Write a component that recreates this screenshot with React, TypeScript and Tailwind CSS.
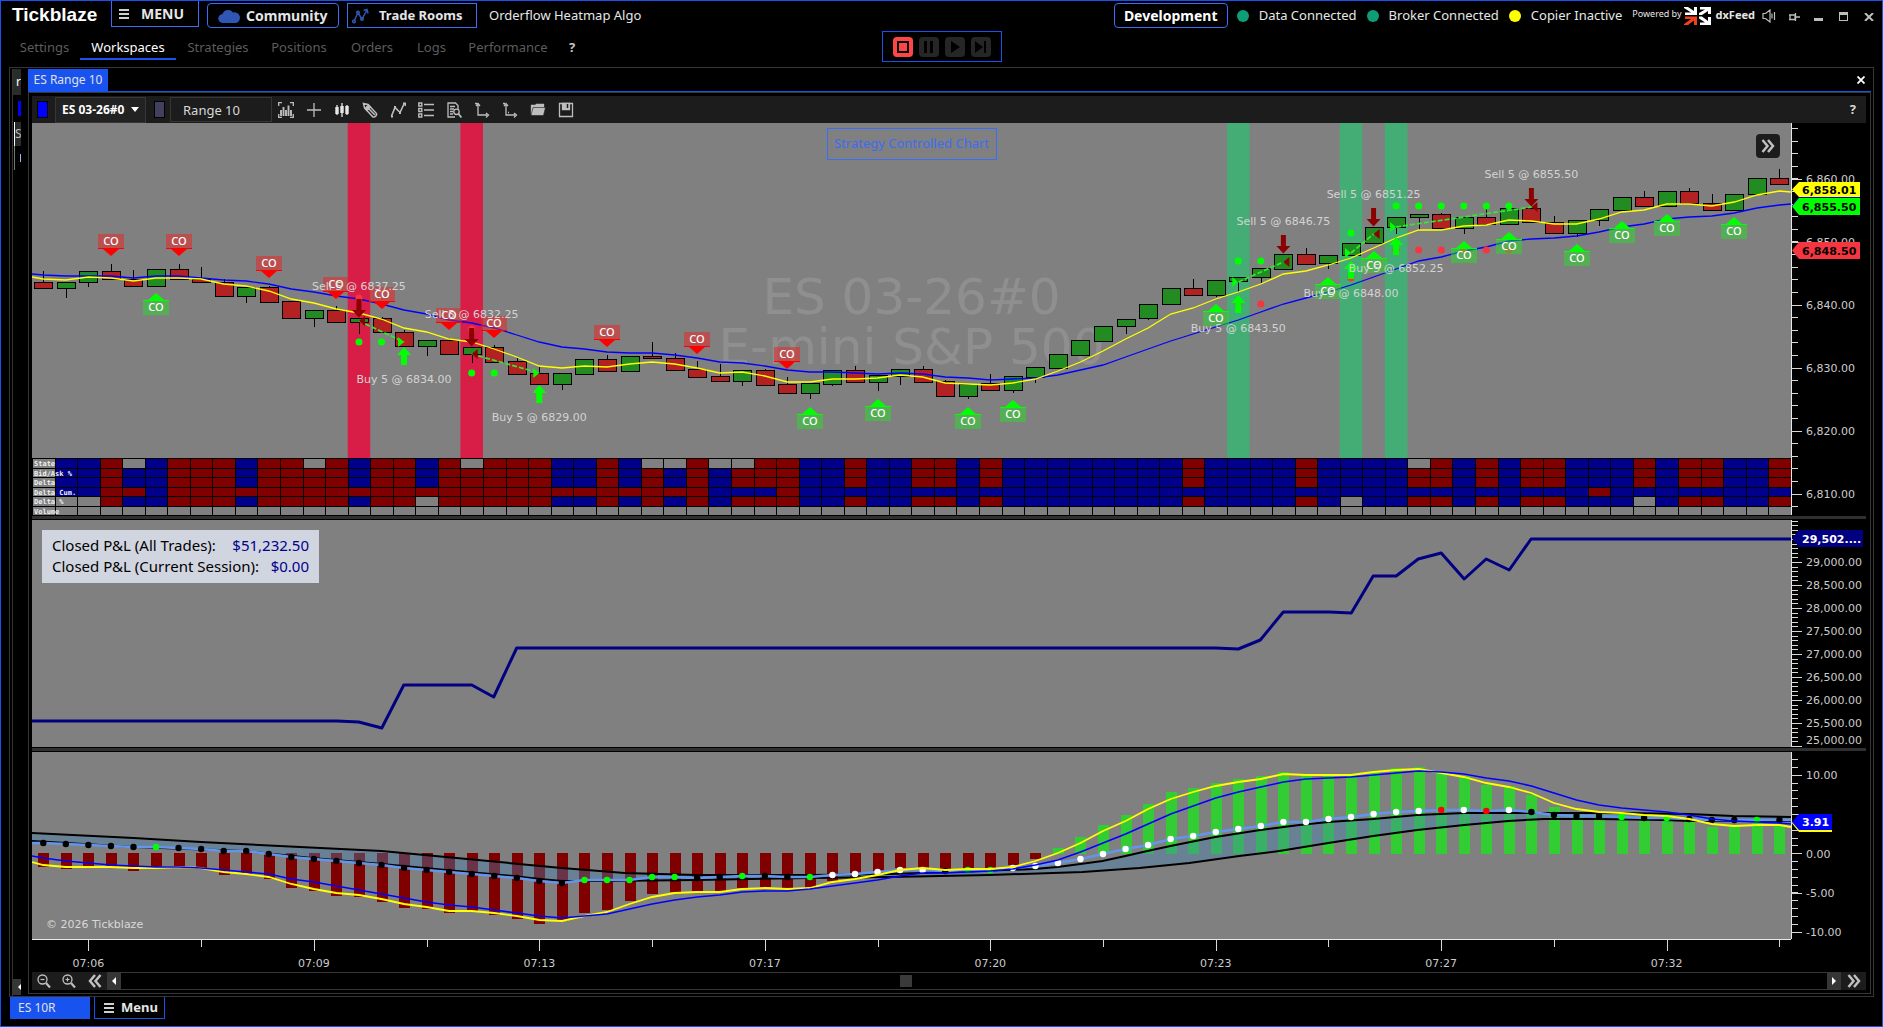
import { useLayoutEffect, useRef, useState } from "react";
import type { ReactNode } from "react";

/* ---------- shared scales ---------- */

const BASE_WIDTH = 1760;
const BARS = 78;

function usePlotWidth() {
  const ref = useRef<HTMLDivElement>(null);
  const [width, setWidth] = useState(BASE_WIDTH);
  useLayoutEffect(() => {
    const el = ref.current;
    if (!el) return;
    const update = () => setWidth(el.clientWidth || BASE_WIDTH);
    update();
    const ro = new ResizeObserver(update);
    ro.observe(el);
    return () => ro.disconnect();
  }, []);
  return { ref, width };
}

type Scale = (i: number) => number;
const makeScale =
  (width: number): Scale =>
  (i) =>
    ((11.3 + 22.56 * i) * width) / BASE_WIDTH;

/* A series holds the left edge value, one value per bar and the right edge value. */
const seriesPoints = (values: number[], x: Scale, width: number) =>
  values
    .map((v, k) => {
      const px = k === 0 ? 0 : k > BARS ? width : x(k - 1);
      return `${px.toFixed(1)},${v}`;
    })
    .join(" ");

const xyPoints = (pts: number[][], width: number) =>
  pts.map(([px, py]) => `${(((px - 32) * width) / BASE_WIDTH).toFixed(1)},${py}`);

/* ---------- price pane data ---------- */

/* direction, body top, body bottom, wick top, wick bottom */
type Candle = [string, number, number, number, number];
const candles: Candle[] = [
  ["r", 282, 288, 271, 288], ["g", 282, 288, 282, 298], ["g", 271, 282, 271, 287], ["r", 271, 279, 264, 279],
  ["r", 279, 286, 270, 286], ["g", 269, 286, 269, 286], ["r", 269, 279, 264, 279], ["r", 279, 282, 267, 282],
  ["r", 282, 296, 279, 296], ["g", 287, 296, 287, 303], ["r", 287, 302, 286, 302], ["r", 301, 318, 301, 318],
  ["g", 310, 318, 310, 327], ["r", 310, 322, 306, 322], ["g", 318, 322, 318, 334], ["r", 318, 332, 317, 332],
  ["r", 332, 346, 330, 346], ["g", 340, 346, 340, 356], ["r", 340, 354, 338, 354], ["g", 347, 354, 347, 363],
  ["r", 347, 362, 345, 362], ["r", 361, 374, 358, 374], ["r", 373, 384, 367, 384], ["g", 373, 384, 373, 390],
  ["g", 359, 374, 359, 375], ["r", 359, 371, 355, 371], ["g", 356, 371, 356, 372], ["r", 356, 358, 342, 358],
  ["r", 358, 370, 353, 370], ["r", 369, 377, 361, 377], ["r", 376, 381, 364, 381], ["g", 370, 381, 370, 386],
  ["r", 370, 385, 369, 385], ["r", 384, 393, 377, 393], ["g", 383, 393, 383, 399], ["g", 370, 384, 370, 386],
  ["r", 370, 382, 366, 382], ["g", 375, 382, 375, 391], ["g", 369, 376, 369, 385], ["r", 369, 382, 366, 382],
  ["r", 381, 396, 380, 396], ["g", 384, 396, 384, 399], ["r", 383, 390, 374, 390], ["g", 376, 390, 376, 393],
  ["g", 367, 377, 367, 383], ["g", 354, 368, 354, 369], ["g", 340, 355, 340, 356], ["g", 326, 341, 326, 342],
  ["g", 319, 326, 319, 334], ["g", 304, 318, 304, 320], ["g", 288, 304, 288, 304], ["r", 288, 295, 279, 295],
  ["g", 280, 295, 280, 297], ["g", 277, 281, 277, 292], ["g", 268, 277, 268, 283], ["g", 254, 269, 254, 270],
  ["r", 254, 264, 248, 264], ["g", 255, 263, 255, 269], ["g", 243, 255, 243, 256], ["g", 227, 243, 227, 243],
  ["g", 217, 227, 217, 234], ["g", 214, 217, 214, 230], ["r", 214, 228, 213, 228], ["g", 217, 228, 217, 234],
  ["r", 217, 224, 208, 224], ["g", 208, 224, 208, 224], ["r", 208, 222, 208, 222], ["r", 222, 233, 216, 233],
  ["g", 220, 233, 220, 237], ["g", 209, 220, 209, 226], ["g", 197, 210, 197, 211], ["r", 197, 206, 191, 206],
  ["g", 191, 206, 191, 206], ["r", 191, 203, 188, 203], ["r", 203, 210, 194, 210], ["g", 194, 210, 194, 210],
  ["g", 178, 194, 178, 194], ["r", 178, 184, 169, 184],
];

const fastAverage = [
  277, 279, 280, 277, 278, 281, 278, 278, 279, 284, 286, 291, 299, 303, 309, 313, 319, 328, 332, 339, 342, 349, 357,
  366, 368, 366, 367, 364, 362, 364, 368, 373, 372, 376, 382, 382, 379, 379, 378, 375, 377, 383, 384, 385, 383, 379,
  371, 362, 351, 339, 328, 314, 308, 299, 292, 284, 274, 271, 265, 258, 248, 238, 230, 230, 226, 225, 220, 221, 224,
  224, 219, 212, 210, 204, 204, 206, 202, 195, 191, 192,
];
const slowAverage = [
  274, 275, 276, 276, 276, 278, 276, 276, 278, 280, 281, 284, 289, 292, 296, 299, 304, 310, 314, 320, 323, 328, 335,
  342, 347, 349, 352, 353, 353, 355, 358, 362, 363, 366, 370, 372, 372, 373, 374, 373, 374, 377, 378, 380, 379, 378,
  375, 370, 365, 357, 349, 341, 334, 327, 320, 312, 304, 298, 292, 285, 277, 269, 261, 257, 251, 247, 241, 239, 238,
  236, 232, 227, 224, 219, 217, 216, 213, 208, 205, 204,
];

const redFlags = [[3, 234], [6, 234], [10, 256], [13, 277], [15, 287], [18, 308], [20, 316], [25, 325], [29, 332], [33, 347]];
const greenFlags = [
  [5, 293], [34, 407], [37, 399], [41, 407], [43, 400], [52, 304], [57, 277], [59, 251], [63, 241], [65, 232],
  [68, 244], [70, 221], [72, 214], [75, 217],
];
const limeDots = [
  [14, 342], [15, 342], [19, 373], [20, 373], [53, 261], [54, 261], [58, 233],
  [60, 206], [61, 206], [62, 206], [63, 206], [64, 206], [65, 206],
];
const redDots = [[14, 298], [19, 329], [53, 304], [54, 304], [58, 278], [60, 250], [61, 250], [62, 250], [63, 250], [64, 250], [65, 250]];
const sellArrows = [[14, 299], [19, 328], [55, 235], [59, 208], [66, 188]];
const buyArrows = [[16, 347], [22, 385], [53, 295], [58, 261], [60, 237]];
const tradeLabels: [number, number, string][] = [
  [14, 290, "Sell 5 @ 6837.25"], [19, 318, "Sell 5 @ 6832.25"], [55, 225, "Sell 5 @ 6846.75"],
  [59, 198, "Sell 5 @ 6851.25"], [66, 178, "Sell 5 @ 6855.50"], [16, 383, "Buy 5 @ 6834.00"],
  [22, 421, "Buy 5 @ 6829.00"], [53, 332, "Buy 5 @ 6843.50"], [58, 297, "Buy 5 @ 6848.00"], [60, 272, "Buy 5 @ 6852.25"],
];
/* start bar, start y, end bar, end y, short trade */
const trades: [number, number, number, number, boolean][] = [
  [14, 321, 16, 342, true], [19, 354, 22, 373, true], [53, 282, 55, 262, false],
  [58, 253, 59, 234, false], [60, 227, 66, 207, false],
];

const bidAsk = "gbbrbbrrrbrrrrbrrbrrrrrbbrbrbrbrrrbbrbbrrbrbbbbbbbbrbbbbrbbbbrrbrbrrbbbrbrrbbr";
const heatRows: { name: string; y: number; h: number; cells: string }[] = [
  { name: "State", y: 458, h: 10, cells: "gbbrgbrrrbrrgrbrrbrgrrrbbrbggrggrrbbrbbrrbrbbbbbbbbrbbbbrbbbbgrbrbrrbbbrbrrbbr" },
  { name: "Bid/Ask %", y: 468, h: 9, cells: bidAsk },
  { name: "Delta", y: 477, h: 10, cells: bidAsk },
  { name: "Delta Cum.", y: 487, h: 9, cells: "gbbrrb" + "r".repeat(24) + "bbbr" + "b".repeat(35) + "r" + "b".repeat(8) },
  { name: "Delta %", y: 496, h: 10, cells: "gggrbbrrrbrrrrbrrgrrrrrbbrbrbrbrrrbbrbbrrbrbbbbbbbbrbbbbrbgbbrrbrbrrbbbgbrrbbr" },
  { name: "Volume", y: 506, h: 9, cells: "g".repeat(78) },
];
const heatColor: Record<string, string> = { b: "#00008b", r: "#800000", g: "#808080" };

/* ---------- profit and oscillator data ---------- */

const profit = [
  [32, 721], [337, 721], [359, 722], [382, 728], [404, 685], [450, 685], [472, 685], [494, 697], [517, 648], [1216, 648],
  [1239, 649], [1261, 640], [1284, 612], [1330, 612], [1352, 613], [1374, 576], [1397, 576], [1419, 559], [1442, 553],
  [1465, 579], [1487, 559], [1510, 570], [1532, 539], [1792, 539],
];
const histogram = [
  867, 869, 867, 867, 871, 867, 867, 869, 875, 874, 879, 888, 891, 896, 897, 902, 908, 909, 913, 912, 915, 919, 924,
  921, 913, 910, 901, 894, 892, 891, 891, 888, 887, 889, 888, 881, 877, 873, 868, 868, 871, 869, 868, 865, 859, 848,
  837, 825, 815, 804, 792, 788, 783, 779, 776, 772, 775, 775, 774, 771, 768, 767, 773, 776, 785, 786, 795, 807, 812,
  814, 814, 814, 813, 819, 827, 826, 823, 825,
];
const bandTop = [
  [32, 833], [134, 838], [201, 842], [382, 851], [446, 857], [562, 868], [625, 873], [696, 875], [811, 875], [891, 874],
  [980, 871], [1035, 869], [1058, 867], [1081, 864], [1103, 861], [1126, 856], [1148, 851], [1171, 846], [1216, 837],
  [1261, 830], [1300, 825], [1329, 822], [1374, 819], [1418, 815], [1465, 813], [1509, 813], [1555, 813], [1622, 813],
  [1690, 814], [1734, 816], [1792, 817],
];
const bandBottom = [
  [32, 841], [134, 847], [245, 851], [312, 858], [382, 864], [446, 870], [513, 876], [540, 879], [562, 881], [607, 881],
  [696, 880], [811, 878], [891, 877], [990, 875], [1083, 872], [1140, 868], [1190, 863], [1240, 856], [1280, 851],
  [1329, 843], [1374, 836], [1418, 830], [1465, 825], [1509, 821], [1545, 819], [1599, 819], [1665, 820], [1690, 821],
  [1792, 821],
];
const midLine = [
  843, 843, 844, 845, 846, 847, 847, 848, 849, 851, 851, 854, 857, 859, 861, 863, 865, 868, 870, 872, 874, 876, 878,
  881, 883, 880, 880, 880, 877, 877, 878, 877, 876, 876, 877, 877, 875, 874, 872, 870, 870, 871, 870, 870, 868, 866,
  863, 859, 854, 849, 845, 839, 836, 832, 829, 826, 822, 822, 819, 817, 814, 812, 811, 810, 810, 811, 810, 812, 815,
  816, 816, 817, 818, 818, 819, 820, 820, 820, 820, 820,
];
const midDots = "kkkkklkkkkkkkkkkkkkkkkkklllllkklkklwwwwwkllwwwwwwwwwwwwwwwwwwwrwrwkkkklklkkklk";
const dotColor: Record<string, string> = { k: "#000000", l: "#00ff00", w: "#ffffff", r: "#ff0000" };
const oscFast = [
  862, 865, 867, 867, 867, 868, 868, 867, 868, 872, 874, 877, 884, 889, 893, 895, 899, 904, 907, 911, 911, 913, 916,
  920, 921, 916, 912, 904, 897, 893, 892, 892, 889, 888, 889, 888, 882, 879, 875, 870, 868, 870, 869, 869, 867, 861,
  853, 843, 831, 821, 809, 799, 792, 786, 782, 779, 774, 775, 775, 775, 772, 770, 769, 773, 777, 783, 787, 793, 803,
  809, 812, 813, 815, 816, 819, 824, 826, 825, 825, 827,
];
const oscSlow = [
  856, 858, 861, 863, 865, 866, 867, 867, 868, 870, 872, 874, 879, 882, 886, 890, 894, 898, 902, 905, 907, 910, 913,
  916, 918, 916, 914, 909, 904, 900, 897, 895, 892, 891, 891, 889, 886, 883, 880, 876, 873, 873, 872, 871, 869, 865,
  860, 852, 843, 834, 824, 814, 806, 798, 792, 787, 782, 779, 778, 777, 775, 773, 771, 772, 774, 778, 781, 786, 793,
  800, 805, 808, 810, 812, 815, 819, 821, 822, 823, 824,
];

/* ---------- axis ---------- */

function Axis({
  top, height, labels, ticks, majors, children,
}: {
  top: number;
  height: number;
  labels: [number, string][];
  ticks: number[];
  majors: number[];
  children?: ReactNode;
}) {
  return (
    <svg className="block w-[75px] shrink-0 bg-black" height={height} viewBox={`0 ${top} 75 ${height}`} aria-label="Value axis">
      <rect x={0} y={top} width={1} height={height} fill="#e8e8e8" />
      {ticks.map((y) => (
        <rect key={y} x={0} y={Math.round(y)} width={7} height={1} fill="#d8d8d8" />
      ))}
      {majors.map((y) => (
        <rect key={y} x={0} y={Math.round(y)} width={11} height={1} fill="#d8d8d8" />
      ))}
      {labels.map(([y, t]) => (
        <text key={t} x={15} y={y + 4} fill="#cccccc" fontSize={11}>
          {t}
        </text>
      ))}
      {children}
    </svg>
  );
}

function Tag({ y, h, w, fill, color, text }: { y: number; h: number; w: number; fill: string; color: string; text?: string }) {
  return (
    <g>
      <path d={`M1 ${y + h / 2} L8 ${y} H${w} V${y + h} H8 Z`} fill={fill} />
      {text && (
        <text x={11} y={y + h / 2 + 4} fill={color} fontSize={11} fontWeight={700}>
          {text}
        </text>
      )}
    </g>
  );
}

const range = (n: number) => Array.from({ length: n }, (_, k) => k);

/* ---------- panes ---------- */

function PricePane() {
  const { ref, width } = usePlotWidth();
  const x = makeScale(width);
  const step = (22.56 * width) / BASE_WIDTH;
  const edge = (i: number) => Math.round(x(i - 0.5));
  return (
    <section className="flex" aria-label="Price chart">
      <div ref={ref} className="relative min-w-0 flex-1 overflow-hidden bg-[#808080]">
        <svg className="block w-full" height={392} viewBox={`0 123 ${width} 392`}>
          {[14, 19].map((i) => (
            <rect key={i} x={x(i) - step / 2} y={123} width={step} height={335} fill="#d81e46" />
          ))}
          {[53, 58, 60].map((i) => (
            <rect key={i} x={x(i) - step / 2} y={123} width={step} height={335} fill="#43ad75" />
          ))}
          <g fill="#8f8f8f" fontSize={50} textAnchor="middle">
            <text x={width / 2} y={314}>ES 03-26#0</text>
            <text x={width / 2} y={364}>E-mini S&amp;P 500</text>
          </g>
          {candles.map(([d, t, b, wt, wb], i) => (
            <g key={i}>
              <path d={`M${Math.round(x(i)) + 0.5} ${wt}V${wb}`} stroke="#000" strokeWidth={1} />
              <rect
                x={Math.round(x(i) - 9) + 0.5}
                y={t + 0.5}
                width={18}
                height={b - t}
                fill={d === "r" ? "#b22222" : "#228b22"}
                stroke="#000"
              />
            </g>
          ))}
          <polyline points={seriesPoints(slowAverage, x, width)} fill="none" stroke="#0000ff" strokeWidth={1.3} />
          <polyline points={seriesPoints(fastAverage, x, width)} fill="none" stroke="#ffff00" strokeWidth={1.3} />
          {redDots.map(([i, y]) => (
            <circle key={i} cx={x(i)} cy={y} r={3.5} fill="#f5353f" />
          ))}
          {limeDots.map(([i, y]) => (
            <circle key={i} cx={x(i)} cy={y} r={3.5} fill="#00ff00" />
          ))}
          {sellArrows.map(([i, y]) => (
            <path key={i} transform={`translate(${x(i)} ${y})`} d="M-2.5 0h5v11H7L0 18.500-7 11h4.500z" fill="#8b0000" />
          ))}
          {buyArrows.map(([i, y]) => (
            <path key={i} transform={`translate(${x(i)} ${y})`} d="M0 0l7 8H3v10h-6V8h-4z" fill="#00ff00" />
          ))}
          {trades.map(([a, ya, b, yb, short]) => (
            <g key={a}>
              <path d={`M${x(a)} ${ya}L${x(b)} ${yb}`} stroke="#32e632" strokeWidth={1.8} strokeDasharray="5 2" />
              <path transform={`translate(${x(short ? b : a)} ${short ? yb : ya})`} d="M0 0l-6-5v10z" fill="#00ff00" />
              <path transform={`translate(${x(short ? a : b)} ${short ? ya : yb})`} d="M0 0l6-5v10z" fill="#8b0000" />
            </g>
          ))}
          {redFlags.map(([i, y]) => (
            <g key={i} transform={`translate(${Math.round(x(i))} ${y})`}>
              <rect x={-13} y={0} width={26} height={15} fill="#e62828" fillOpacity={0.55} />
              <path d="M-13 14h26v1H8L0 22-8 15h-5z" fill="#ff0000" />
              <text y={11} textAnchor="middle" fill="#fff" fontSize={11} className="font-['Noto_Sans'] font-medium">CO</text>
            </g>
          ))}
          {greenFlags.map(([i, y]) => (
            <g key={i} transform={`translate(${Math.round(x(i))} ${y})`}>
              <rect x={-13} y={7} width={26} height={15} fill="#28dc28" fillOpacity={0.5} />
              <path d="M-13 8h26V7H8L0 0-8 7h-5z" fill="#00ff00" />
              <text y={18} textAnchor="middle" fill="#fff" fontSize={11} className="font-['Noto_Sans'] font-medium">CO</text>
            </g>
          ))}
          <g fill="#d3d3d3" fontSize={11} textAnchor="middle">
            {tradeLabels.map(([i, y, t]) => (
              <text key={t} x={x(i)} y={y}>{t}</text>
            ))}
          </g>
          {heatRows.map((row) => (
            <g key={row.name}>
              {row.cells.split("").map((c, i) => (
                <rect key={i} x={edge(i)} y={row.y} width={edge(i + 1) - edge(i)} height={row.h} fill={heatColor[c]} />
              ))}
            </g>
          ))}
          {heatRows.map((row) => (
            <rect key={row.name} x={0} y={row.y} width={width} height={1} fill="#000" />
          ))}
          <g>
            {range(BARS).map((i) => (
              <rect key={i} x={edge(i)} y={458} width={1} height={57} fill="#000" />
            ))}
          </g>
          <g fill="#f0f0f0" fontSize={7} className="font-['DejaVu_Sans_Mono',monospace] font-bold">
            {heatRows.map((row) => (
              <text key={row.name} x={2} y={row.y + 8}>{row.name}</text>
            ))}
          </g>
        </svg>
        <div className="absolute inset-x-0 top-[5px] flex justify-center">
          <span className="flex h-8 w-[170px] items-center justify-center border border-[#3c6cf5] font-['Noto_Sans',sans-serif] text-[13px] whitespace-nowrap text-[#3c6cf5]">
            Strategy Controlled Chart
          </span>
        </div>
        <button
          type="button"
          aria-label="Expand panel"
          className="absolute top-[11px] right-[11px] flex size-6 items-center justify-center rounded bg-[#1c1c1c]"
        >
          <Chevrons />
        </button>
      </div>
      <Axis
        top={123}
        height={392}
        ticks={range(31).map((k) => 128 + 12.61 * k).filter((y) => y < 512)}
        majors={range(6).map((k) => 178.5 + 63.04 * k)}
        labels={[[179, "6,860.00"], [242, "6,850.00"], [305, "6,840.00"], [368, "6,830.00"], [431, "6,820.00"], [494, "6,810.00"]]}
      >
        <Tag y={197} h={17} w={69} fill="#0000ff" color="#000" />
        <Tag y={182} h={15} w={69} fill="#ffff00" color="#000" text="6,858.01" />
        <Tag y={198} h={17} w={69} fill="#00ff00" color="#000" text="6,855.50" />
        <Tag y={242} h={17} w={69} fill="#f5353f" color="#000" text="6,848.50" />
      </Axis>
    </section>
  );
}

function ProfitPane() {
  const { ref, width } = usePlotWidth();
  return (
    <section className="flex" aria-label="Closed profit chart">
      <div ref={ref} className="relative min-w-0 flex-1 overflow-hidden bg-[#808080]">
        <svg className="block w-full" height={227} viewBox={`0 520 ${width} 227`}>
          <polyline points={xyPoints(profit, width).join(" ")} fill="none" stroke="#000080" strokeWidth={3} strokeLinejoin="round" />
        </svg>
        <dl className="absolute top-[10px] left-[10px] flex h-[53px] w-[277px] flex-col justify-center bg-[#d1d5e0] px-[10px] pb-px font-['Noto_Sans',sans-serif] text-[15px] leading-[21px] text-black">
          <div className="flex justify-between">
            <dt>Closed P&amp;L (All Trades):</dt>
            <dd className="text-[#00008b]">$51,232.50</dd>
          </div>
          <div className="flex justify-between">
            <dt>Closed P&amp;L (Current Session):</dt>
            <dd className="text-[#00008b]">$0.00</dd>
          </div>
        </dl>
      </div>
      <Axis
        top={520}
        height={227}
        ticks={range(50).map((k) => 746 - 4.6 * k).filter((y) => y > 520)}
        majors={[...range(8).map((k) => 562 + 23 * k), 746]}
        labels={[
          [562, "29,000.00"], [585, "28,500.00"], [608, "28,000.00"], [631, "27,500.00"], [654, "27,000.00"],
          [677, "26,500.00"], [700, "26,000.00"], [723, "25,500.00"], [740, "25,000.00"],
        ]}
      >
        <Tag y={530} h={17} w={72} fill="#000080" color="#fff" text="29,502...." />
      </Axis>
    </section>
  );
}

function OscillatorPane() {
  const { ref, width } = usePlotWidth();
  const x = makeScale(width);
  const upper = xyPoints(bandTop, width);
  const lower = xyPoints(bandBottom, width);
  return (
    <section className="flex" aria-label="Oscillator chart">
      <div ref={ref} className="min-w-0 flex-1 overflow-hidden bg-[#808080]">
        <svg className="block w-full" height={187} viewBox={`0 752 ${width} 187`}>
          {histogram.map((y, i) =>
            y > 853 ? (
              <rect key={i} x={Math.round(x(i) - 5)} y={853} width={11} height={y - 853} fill="#800000" />
            ) : (
              <rect key={i} x={Math.round(x(i) - 5)} y={y} width={11} height={854 - y} fill="#32cd32" />
            ),
          )}
          <polygon points={[...upper, ...[...lower].reverse()].join(" ")} fill="#4682b4" fillOpacity={0.4} />
          <polyline points={upper.join(" ")} fill="none" stroke="#000" strokeWidth={2} />
          <polyline points={lower.join(" ")} fill="none" stroke="#000" strokeWidth={2} />
          <polyline points={seriesPoints(midLine, x, width)} fill="none" stroke="#6495ed" strokeWidth={2.5} />
          {midLine.slice(1, BARS + 1).map((y, i) => (
            <circle key={i} cx={x(i)} cy={y} r={3.2} fill={dotColor[midDots[i]]} />
          ))}
          <polyline points={seriesPoints(oscFast, x, width)} fill="none" stroke="#ffff00" strokeWidth={1.8} />
          <polyline points={seriesPoints(oscSlow, x, width)} fill="none" stroke="#0000ff" strokeWidth={1.6} />
          <text x={14} y={928} fill="#d8d8d8" fontSize={11}>© 2026 Tickblaze</text>
        </svg>
      </div>
      <Axis
        top={752}
        height={187}
        ticks={range(23).map((k) => 759 + 7.85 * k)}
        majors={[775, 814, 853, 893, 932]}
        labels={[[775, "10.00"], [854, "0.00"], [893, "-5.00"], [932, "-10.00"]]}
      >
        <Tag y={815} h={17} w={41} fill="#ffff00" color="#fff" />
        <Tag y={814} h={16} w={41} fill="#0000ff" color="#fff" text="3.91" />
      </Axis>
    </section>
  );
}

function TimeAxis() {
  const { ref, width } = usePlotWidth();
  const x = makeScale(width);
  const times = ["07:06", "07:09", "07:13", "07:17", "07:20", "07:23", "07:27", "07:32"];
  return (
    <div className="flex">
      <div ref={ref} className="min-w-0 flex-1">
        <svg className="block w-full" height={33} viewBox={`0 939 ${width} 33`} aria-label="Time axis">
          <rect x={0} y={939} width={width} height={1} fill="#e8e8e8" />
          {range(16).map((k) => (
            <rect key={k} x={Math.round(x(2 + 5 * k))} y={940} width={1} height={k % 2 ? 7 : 11} fill="#d8d8d8" />
          ))}
          {times.map((t, k) => (
            <text key={t} x={x(2 + 10 * k)} y={967} textAnchor="middle" fill="#cccccc" fontSize={11}>{t}</text>
          ))}
        </svg>
      </div>
      <div className="w-[75px] shrink-0" />
    </div>
  );
}

/* ---------- icons ---------- */

function Chevrons({ left = false }: { left?: boolean }) {
  return (
    <svg width={14} height={14} viewBox="0 0 14 14" fill="none" stroke="#c0c0c0" strokeWidth={2.5} aria-hidden="true">
      {left ? <path d="M7 1L2 7l5 6M12.500 1l-5 6 5 6" /> : <path d="M1.500 1l5 6-5 6M7 1l5 6-5 6" />}
    </svg>
  );
}

function Bars() {
  return (
    <svg width={10} height={12} viewBox="0 0 10 12" fill="#d0d0d0" aria-hidden="true">
      <path d="M0 1h10v2H0zM0 5h10v2H0zM0 9h10v2H0z" />
    </svg>
  );
}

function ToolIcon({ label, children }: { label: string; children: ReactNode }) {
  return (
    <button type="button" aria-label={label} className="flex h-[27px] w-7 items-center justify-center">
      <svg width={16} height={16} viewBox="0 0 16 16" fill="none" stroke="#bdbdbd" strokeWidth={1.3} aria-hidden="true">
        {children}
      </svg>
    </button>
  );
}

function Toolbar() {
  return (
    <div className="flex h-[27px] items-center bg-[#1c1c1c] font-['Noto_Sans',sans-serif] text-[13px] text-[#d8d8d8]">
      <button type="button" aria-label="Link colour" className="ml-[5px] h-[17px] w-[11px] border border-black bg-[#0000ff]" />
      <button
        type="button"
        className="ml-[7px] flex h-[26px] w-[91px] items-center justify-between border border-[#363636] bg-[#222222] px-[6px] text-xs font-bold text-white"
      >
        ES 03-26#0
        <svg width={8} height={5} viewBox="0 0 8 5" fill="#fff" aria-hidden="true">
          <path d="M0 0h8L4 5z" />
        </svg>
      </button>
      <button type="button" aria-label="Interval link colour" className="ml-2 h-[17px] w-[11px] border border-black bg-[#41415e]" />
      <input
        aria-label="Interval"
        defaultValue="Range 10"
        className="ml-[5px] h-[25px] w-[102px] border border-[#363636] bg-[#1c1c1c] pl-3 text-[13px] text-[#d8d8d8]"
      />
      <ToolIcon label="Indicators">
        <path d="M.7 4V.7H4M12 .7h3.300V4M.7 12v3.300H4M12 15.300h3.300V12" />
        <path d="M3 14V8M5.500 14V5M8 14V8M10.500 14V3.500M13 14V8" strokeWidth={1.900} />
      </ToolIcon>
      <ToolIcon label="Crosshair">
        <path d="M8 1v14M1 8h14" />
      </ToolIcon>
      <ToolIcon label="Chart style">
        <path d="M3 3v10M8 1v14M13 3v10" stroke="#e6e6e6" />
        <path d="M3 5v7M8 4v7M13 4v8" strokeWidth={3.400} stroke="#e6e6e6" />
      </ToolIcon>
      <ToolIcon label="Drawing tools">
        <path d="M1.500 1.500l1 4.500 8.500 9c2 .5 4-1.500 3.500-3.500L6 2.500zM4.500 4.500l8.500 8.500" strokeWidth={1.500} />
        <path d="M3 6.500L6.500 3l2 2L5 8.500z" fill="#bdbdbd" />
      </ToolIcon>
      <ToolIcon label="Strategies">
        <path d="M1.500 14L5 5.500l5 5L14 2" strokeWidth={1.600} />
        <path d="M1 14.500h2M4 5h2M9 11h2M13 1.500h2.500V4" strokeWidth={2} />
      </ToolIcon>
      <ToolIcon label="Order list">
        <path d="M6 2.500h10M6 8h10M6 13.500h10" />
        <path d="M.8 1h3v3h-3zM.8 6.500h3v3h-3zM.8 12h3v3h-3z" strokeWidth={1.400} />
      </ToolIcon>
      <ToolIcon label="Inspect data">
        <path d="M12 7V3.500L9.500 1H2v14h7M4 4.500h5M4 7h4M4 9.500h3M4 12h3" />
        <circle cx="10.500" cy="9.800" r="2.700" />
        <path d="M12.500 12l3 3.500" strokeWidth={1.800} />
      </ToolIcon>
      <ToolIcon label="Scale price axis">
        <path d="M4 3v10h9M2 4l2-2.500L6 4M12 11l2.500 2L12 15.500" />
        <path d="M4 1v2M1 1.500h2" />
      </ToolIcon>
      <ToolIcon label="Scale time axis">
        <path d="M4 3v10h9M2 4l2-2.500L6 4M12 11l2.500 2L12 15.500" />
        <path d="M1 1.500h2M6 10.500h1" />
      </ToolIcon>
      <ToolIcon label="Open template">
        <path d="M1.500 12.500v-9h4l1-1h7v3" fill="#bdbdbd" />
        <path d="M1 13.500L3 5.500h12.500l-2 8z" fill="#bdbdbd" stroke="#1c1c1c" strokeWidth={0.600} />
      </ToolIcon>
      <ToolIcon label="Save template">
        <path d="M1.500 1.500h13v13h-13z" />
        <path d="M4.500 1.500h7v6h-7z" fill="#bdbdbd" />
        <path d="M9.500 2v4" stroke="#1c1c1c" strokeWidth={1.500} />
      </ToolIcon>
      <button type="button" aria-label="Help" className="mr-[10px] ml-auto font-bold">?</button>
    </div>
  );
}

/* ---------- header ---------- */

function Status({ color, label }: { color: string; label: string }) {
  return (
    <span className="flex items-center gap-[10px] whitespace-nowrap">
      <svg width={12} height={12} aria-hidden="true">
        <circle cx={6} cy={6} r={6} fill={color} />
      </svg>
      {label}
    </span>
  );
}

function DxFeedLogo() {
  return (
    <svg width={27} height={18} viewBox="0 0 27 18" className="ml-[2px]" aria-hidden="true">
      <path d="M0 0h4l6 4V0h3v8H1V5.500h6L0 1z" fill="#fff" />
      <path d="M15 8V6l6-3.500h-5V0h11v7h-3V4l-6 4z" fill="#fff" />
      <path d="M15 9.500h3l6 4.500v-4h3v8H16v-2.500h5l-6-4z" fill="#fff" />
      <path d="M1 9.500h12V18h-3v-4.500L4 18H0v-1l7-5H1z" fill="#f0401c" />
    </svg>
  );
}

function Header() {
  return (
    <header className="flex h-[27px] items-start font-['Noto_Sans',sans-serif] text-[13px] text-[#e6e6e6]">
      <span className="ml-[11px] w-[99px] font-['Liberation_Sans',sans-serif] text-[19px] leading-7 font-bold text-white">Tickblaze</span>
      <button type="button" className="flex h-[26px] w-[88px] items-center gap-3 border border-t-0 border-[#3c6cf5] pl-[7px] text-sm font-bold">
        <Bars />
        MENU
      </button>
      <button type="button" className="mt-[2px] ml-2 flex h-[25px] w-[132px] items-center gap-[6px] rounded-sm border border-[#3c6cf5] pl-[10px] text-sm font-bold">
        <svg width={22} height={14} viewBox="0 0 22 14" fill="#2f55b5" aria-hidden="true">
          <path d="M5 14a4.500 4.500 0 01-.5-9A6 6 0 0115 3.500 5 5 0 0118 14z" />
        </svg>
        Community
      </button>
      <button type="button" className="mt-[2px] ml-2 flex h-[25px] w-[130px] items-center gap-[10px] border border-[#3c6cf5] pl-1 text-[13px] font-bold">
        <svg width={17} height={16} viewBox="0 0 17 16" fill="none" stroke="#2f55b5" strokeWidth={1.500} aria-hidden="true">
          <path d="M2 13L6 5l4 6 5-9M11.500 2.500L15 1.500l1 4" />
          <circle cx="2" cy="13.500" r="1.300" />
          <circle cx="6" cy="4.500" r="1.300" />
          <circle cx="10" cy="11" r="1.300" />
        </svg>
        Trade Rooms
      </button>
      <h1 className="ml-3 text-[13px] leading-[29px] whitespace-nowrap">Orderflow Heatmap Algo</h1>
      <div className="ml-auto flex h-[29px] items-center">
        <button type="button" className="mr-[9px] h-[25px] w-[114px] rounded-sm border border-[#3c6cf5] text-sm font-bold text-white">Development</button>
        <div className="flex items-center gap-[10px]">
          <Status color="#0d9e78" label="Data Connected" />
          <Status color="#0d9e78" label="Broker Connected" />
          <Status color="#ffff00" label="Copier Inactive" />
        </div>
        <div className="ml-[10px] flex items-center">
          <span className="mb-1 text-[9px] whitespace-nowrap">Powered by</span>
          <DxFeedLogo />
          <span className="ml-[5px] text-[11px] font-bold">dxFeed</span>
        </div>
        <button type="button" aria-label="Sound" className="ml-[7px]">
          <svg width={14} height={14} viewBox="0 0 14 14" fill="none" stroke="#bdbdbd" strokeWidth={1.200} aria-hidden="true">
            <path d="M1 4.500h2.500L8 1v12L3.500 9.500H1zM10 4.500v5M12.500 3v8" />
          </svg>
        </button>
        <button type="button" aria-label="Pin window" className="mt-[2px] ml-[13px]">
          <svg width={11} height={8} viewBox="0 0 11 8" fill="none" stroke="#bdbdbd" strokeWidth={1.300} aria-hidden="true">
            <path d="M0 2h6v4.500H0M1 2v4.500M6.500 0v8M7 4h4" />
          </svg>
        </button>
        <button type="button" aria-label="Minimise" className="mt-2 ml-[14px] h-[3px] w-[9px] bg-[#bdbdbd]" />
        <button type="button" aria-label="Maximise" className="mt-[2px] ml-4 h-[9px] w-[9px] border border-t-[3px] border-[#bdbdbd]" />
        <button type="button" aria-label="Close" className="mt-[2px] mr-2 ml-4">
          <svg width={10} height={8} viewBox="0 0 10 8" stroke="#bdbdbd" strokeWidth={2} aria-hidden="true">
            <path d="M1 0l8 8M9 0L1 8" />
          </svg>
        </button>
      </div>
    </header>
  );
}

const tabs: [string, string][] = [
  ["Settings", "w-[71px]"],
  ["Workspaces", "w-24"],
  ["Strategies", "w-[84px]"],
  ["Positions", "w-[78px]"],
  ["Orders", "w-[68px]"],
  ["Logs", "w-[51px]"],
  ["Performance", "w-[102px]"],
];

function Navigation() {
  return (
    <div className="flex h-[39px] items-start justify-between font-['Noto_Sans',sans-serif] text-[13px] text-[#5c5c5c]">
      <nav className="ml-2 flex flex-1 pt-2">
        {tabs.map(([t, w]) => (
          <a
            key={t}
            href="#"
            className={`flex h-6 items-center justify-center border-b-2 pt-px ${w} ${
              t === "Workspaces" ? "border-[#1853f0] text-white" : "border-transparent"
            }`}
          >
            {t}
          </a>
        ))}
        <button type="button" aria-label="Help" className="ml-[10px] flex h-[23px] items-center font-bold text-[#c8c8c8]">?</button>
      </nav>
      <div className="mt-[3px] flex h-[31px] w-[120px] items-center justify-center gap-[6px] border border-[#1853f0]">
        <button type="button" aria-label="Stop" className="flex size-5 items-center justify-center rounded-sm bg-[#ff4646]">
          <span className="size-3 border-2 border-black bg-[#ff4646]" />
        </button>
        {[
          ["Pause", "M5 4h3v12H5zM11 4h3v12h-3z"],
          ["Play", "M6 4l9 6-9 6z"],
          ["Step", "M4 4l8 6-8 6zM13 4h2v12h-2z"],
        ].map(([label, d]) => (
          <button key={label} type="button" aria-label={label} className="size-5 rounded-sm bg-[#262626]">
            <svg width={20} height={20} viewBox="0 0 20 20" fill="#000" aria-hidden="true">
              <path d={d} />
            </svg>
          </button>
        ))}
      </div>
      <div className="mr-2 flex-1" />
    </div>
  );
}

/* ---------- workspace ---------- */

function HiddenWindows() {
  return (
    <div className="flex w-[11px] shrink-0 flex-col overflow-hidden border-l border-[#363636] font-['Noto_Sans',sans-serif] text-xs text-white">
      <div className="mr-[2px] flex h-[26px] items-center justify-end overflow-hidden bg-[#2b2b2b]">r</div>
      <div className="mt-[6px] mr-[2px] ml-auto h-[15px] w-[3px] bg-[#0000ff]" />
      <div className="mt-[6px] mr-[2px] ml-px h-6 overflow-hidden border-l border-white bg-[#2b2b2b] leading-6 text-[#bdbdbd]">S</div>
      <div className="mr-[2px] ml-px flex h-6 items-center border-l border-[#777777]">
        <span className="ml-[5px] h-2 w-px bg-[#9db4ff]" />
      </div>
      <div className="flex-1" />
      <div className="mr-[2px] mb-px flex h-4 items-center justify-end bg-[#363636]">
        <svg width={3} height={6} fill="#fff" aria-hidden="true">
          <path d="M3 0v6L0 3z" />
        </svg>
      </div>
    </div>
  );
}

function Magnifier({ plus = false }: { plus?: boolean }) {
  return (
    <svg width={14} height={14} viewBox="0 0 14 14" fill="none" stroke="#c0c0c0" aria-hidden="true">
      <circle cx="5.500" cy="5.500" r="4.500" strokeWidth={1.300} />
      <path d={plus ? "M3.500 5.500h4M5.500 3.500v4" : "M3.500 5.500h4"} strokeWidth={1.200} />
      <path d="M9 9l4 4.500" strokeWidth={2.200} />
    </svg>
  );
}

function ScrollRow() {
  return (
    <div className="flex h-[18px] items-stretch bg-[#1c1c1c]">
      <button type="button" aria-label="Zoom out" className="flex w-6 items-center justify-center">
        <Magnifier />
      </button>
      <button type="button" aria-label="Zoom in" className="flex w-[26px] items-center justify-center">
        <Magnifier plus />
      </button>
      <button type="button" aria-label="Scroll to start" className="flex w-[25px] items-center justify-center">
        <Chevrons left />
      </button>
      <button type="button" aria-label="Scroll left" className="flex w-[14px] items-center justify-center bg-[#363636]">
        <svg width={4} height={8} fill="#fff" aria-hidden="true"><path d="M4 0v8L0 4z" /></svg>
      </button>
      <div className="flex flex-1 items-center border-y border-[#363636] bg-black pl-[779px]">
        <div className="h-3 w-3 bg-[#3a3a3a]" />
      </div>
      <button type="button" aria-label="Scroll right" className="flex w-[14px] items-center justify-center bg-[#363636]">
        <svg width={4} height={8} fill="#fff" aria-hidden="true"><path d="M0 0v8l4-4z" /></svg>
      </button>
      <button type="button" aria-label="Scroll to end" className="flex w-[25px] items-center justify-center">
        <Chevrons />
      </button>
    </div>
  );
}

const Splitter = () => <div className="h-[5px] border-y border-black bg-[#303030]" />;

export default function App() {
  return (
    <div className="flex min-h-screen flex-col border border-[#1853f0] bg-black font-['DejaVu_Sans',sans-serif]">
      <Header />
      <Navigation />
      <main className="mx-2 border border-[#363636] pt-px">
        <div className="flex">
          <div className="ml-[2px] flex">
            <HiddenWindows />
          </div>
          <div className="mr-[2px] ml-[5px] min-w-0 flex-1">
            <div className="flex h-[22px] items-stretch justify-between font-['Noto_Sans',sans-serif] text-xs">
              <button type="button" className="w-20 bg-[#1853f0] text-[#e0e0e0]">ES Range 10</button>
              <button type="button" aria-label="Close tab" className="mr-[6px]">
                <svg width={8} height={8} viewBox="0 0 8 8" stroke="#fff" strokeWidth={1.800} aria-hidden="true">
                  <path d="M.5.5l7 7M7.500.5l-7 7" />
                </svg>
              </button>
            </div>
            <div className="border-t border-[#1853f0]">
              <div className="border border-[#363636] pt-[3px] pr-[4px] pb-[3px] pl-[3px]">
                <Toolbar />
                <PricePane />
                <Splitter />
                <ProfitPane />
                <Splitter />
                <OscillatorPane />
                <TimeAxis />
                <ScrollRow />
              </div>
            </div>
            <div className="h-[2px]" />
          </div>
        </div>
      </main>
      <footer className="ml-[9px] flex h-[22px] gap-1 font-['Noto_Sans',sans-serif]">
        <button type="button" className="w-20 bg-[#1853f0] pl-2 text-left text-xs text-[#e0e0e0]">ES 10R</button>
        <button type="button" className="flex w-[71px] items-center gap-[7px] border border-t-0 border-[#1853f0] pl-[9px] text-[13px] font-bold text-[#e6e6e6]">
          <Bars />
          Menu
        </button>
      </footer>
    </div>
  );
}
